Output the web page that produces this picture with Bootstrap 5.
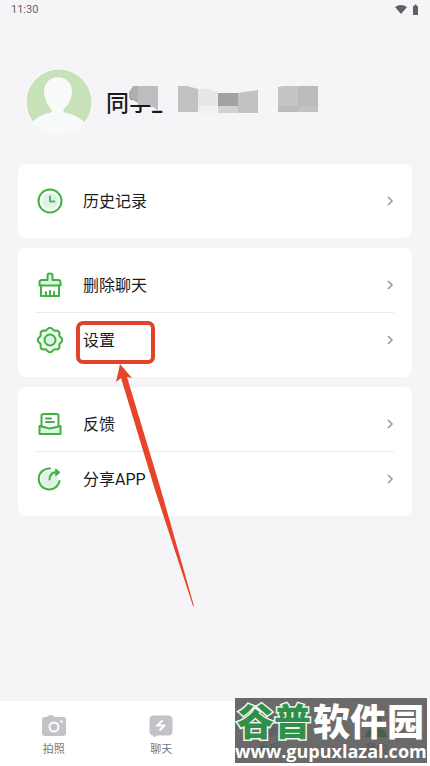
<!DOCTYPE html>
<html lang="zh-CN">
<head>
<meta charset="utf-8">
<meta name="viewport" content="width=device-width, initial-scale=1">
<title>我的</title>
<link href="https://cdn.jsdelivr.net/npm/bootstrap@5.3.0/dist/css/bootstrap.min.css" rel="stylesheet">
<style>
body{background:#f5f5f8;color:#1b1b1f;font-family:Roboto,"Noto Sans CJK SC",sans-serif;font-size:16px}
svg{display:block;flex-shrink:0}
.status{height:20px;padding:0 10px 0 11px;font-size:11px;color:#66666a}
.profile{padding:48px 25px 0;gap:14px}
.who{font-size:23px;line-height:34px;font-weight:500;padding-top:3px}
.mosaic{left:22px;top:2px}
.groups{padding:28px 18px 0;gap:10px}
.menu-group{border-radius:8px;background:#fff;padding:10px 18px}
.menu-row{height:54px;color:#1b1b1f;gap:19px}
.menu-row + .menu-row{border-top:1px solid #ebebee;height:55px}
.menu-row .pic{width:28px;height:28px}
.menu-label{padding-top:1px}
.pic{fill:none;stroke:#3cb43f;stroke-width:2;stroke-linecap:round;stroke-linejoin:round}
.tint{fill:#e0f1e6}
.ring{left:-7px;top:-7px;width:79px;height:43px;border:4px solid #e2412b;border-radius:7px}
.pointer{left:32px;top:36px;pointer-events:none;z-index:2}
.tabs{height:65px;background:#fff}
.tab{gap:4px;padding-top:13px;color:#77777c;font-size:11px;line-height:16px;background:none;border:0}
.stamp{right:3px;bottom:3px;width:192px;height:65px;background:rgba(82,82,82,.86);color:#fff;z-index:3}
.stamp-name{font:900 37px/44px "Noto Sans CJK SC",sans-serif;padding:0 0 0 2px}
.stamp-green{color:#2f9149;-webkit-text-stroke:3px #eef6ef;paint-order:stroke fill;padding-right:2px}
.stamp-url{font:700 18px/18px "Open Sans",sans-serif}
</style>
</head>
<body>
<div class="d-flex flex-column min-vh-100 position-relative">
  <header class="status d-flex align-items-center justify-content-between">
    <span>11:30</span>
    <svg width="26" height="12" viewBox="0 0 26 12" fill="#606064"><path d="M1 3Q7-1 13 3L7 10Z"/><path d="M19 2h1.500V0.500h2V2H24v9h-5z"/></svg>
  </header>
  <section class="profile d-flex align-items-center">
    <svg width="67" height="68" viewBox="0 0 67 68" role="img" aria-label="头像">
      <defs><clipPath id="round"><circle cx="34" cy="34" r="32.500"/></clipPath><filter id="soft"><feGaussianBlur stdDeviation=".7"/></filter></defs>
      <circle cx="34" cy="34" r="33.500" fill="#fbfcfb"/>
      <g clip-path="url(#round)"><path fill="#c7e1b9" d="M0 0h67v68H0z"/><path filter="url(#soft)" fill="#f8fafa" d="M-2 68Q8 47 25 45Q28 44 26 41Q20 34 19 25C18 4 48 4 47 25Q46 34 39 41Q37 44 41 45Q58 47 69 68V74H-2z"/></g>
    </svg>
    <div class="who position-relative">同学_
      <svg class="mosaic position-absolute" width="192" height="30" viewBox="0 0 192 30">
        <path fill="#b0b0b2" d="M5 0h5v17L1 12V6z"/><path fill="#bdbdbf" d="M10 0h20v24L21 19H10z"/>
        <path fill="#c2c2c4" d="M50 0h9l11 3v23H50z"/><path fill="#e7e7e9" d="M70 3l10 0 10 3v14H70z"/><path fill="#f0f0f2" d="M70 20h20v7H70z"/>
        <path fill="#a2a2a4" d="M90 7h20v13H90z"/><path fill="#d2d2d4" d="M90 20h20v7H90z"/><path fill="#c2c2c4" d="M110 7l20-3v23h-20z"/>
        <path fill="#c5c5c7" d="M150 1l5-1h15v20h-20z"/><path fill="#bbbbbd" d="M170 0h20v20h-20zM150 20h20v6h-20z"/><path fill="#c2c2c4" d="M170 20h20v6h-20z"/>
      </svg>
    </div>
  </section>
  <main class="groups d-flex flex-column flex-grow-1">
    <nav class="menu-group">
      <a href="#" class="menu-row d-flex align-items-center text-decoration-none">
        <svg class="pic" viewBox="0 0 28 28"><circle cx="14" cy="14" r="11.500"/><circle class="tint" cx="14" cy="14" r="8" stroke="none"/><path d="M14 9.500v5h4.500" stroke="#55b866"/></svg>
        <span class="menu-label">历史记录</span>
        <svg class="ms-auto" width="7" height="10" viewBox="0 0 7 10" fill="none" stroke="#98989c" stroke-width="1.500"><path d="M1 1L5 5 1 9"/></svg>
      </a>
    </nav>
    <nav class="menu-group">
      <a href="#" class="menu-row d-flex align-items-center text-decoration-none">
        <svg class="pic" viewBox="0 0 28 28"><path class="tint" d="M11.500 9V4.500Q11.500 2.500 14 2.500T16.500 4.500V9H22Q24.500 9 24.500 11V14.500H3.500V11Q3.500 9 6 9Z"/><path d="M5 14.500v10.500h18V14.500M10 25v-4M14 25v-5M18 25v-4"/></svg>
        <span class="menu-label">删除聊天</span>
        <svg class="ms-auto" width="7" height="10" viewBox="0 0 7 10" fill="none" stroke="#98989c" stroke-width="1.500"><path d="M1 1L5 5 1 9"/></svg>
      </a>
      <a href="#" class="menu-row d-flex align-items-center text-decoration-none">
        <svg class="pic" viewBox="0 0 28 28"><path fill="#f0f8f1" d="M11.500 3Q14 .500 16.500 3Q18 5.500 20 4.500Q23.500 4.500 23.500 8Q22.500 10 25 11.500Q27.500 14 25 16.500Q22.500 18 23.500 20Q23.500 23.500 20 23.500Q18 22.500 16.500 25Q14 27.500 11.500 25Q10 22.500 8 23.500Q4.500 23.500 4.500 20Q5.500 18 3 16.500Q.500 14 3 11.500Q5.500 10 4.500 8Q4.500 4.500 8 4.500Q10 5.500 11.500 3Z"/><circle cx="14" cy="14" r="5.500" class="tint"/></svg>
        <span class="menu-label position-relative">设置
          <span class="ring position-absolute"></span>
          <svg class="pointer position-absolute" width="82" height="244" viewBox="0 0 82 244"><path fill="#e7442b" d="M5 0L17 14 12 13L46 126 79 242H78L40 126 6 14L1 18Z"/></svg>
        </span>
        <svg class="ms-auto" width="7" height="10" viewBox="0 0 7 10" fill="none" stroke="#98989c" stroke-width="1.500"><path d="M1 1L5 5 1 9"/></svg>
      </a>
    </nav>
    <nav class="menu-group">
      <a href="#" class="menu-row d-flex align-items-center text-decoration-none">
        <svg class="pic" viewBox="0 0 28 28"><path d="M5.500 16V5.500Q5.500 4 7.500 4H20.500Q22.500 4 22.500 5.500V16M10 8.500h5M10 12h8"/><path class="tint" d="M3.500 16 14 18.500 24.500 16V24H3.500Z"/></svg>
        <span class="menu-label">反馈</span>
        <svg class="ms-auto" width="7" height="10" viewBox="0 0 7 10" fill="none" stroke="#98989c" stroke-width="1.500"><path d="M1 1L5 5 1 9"/></svg>
      </a>
      <a href="#" class="menu-row d-flex align-items-center text-decoration-none">
        <svg class="pic" viewBox="0 0 28 28"><circle class="tint" cx="13.500" cy="14.500" r="8.500" stroke="none"/><path d="M14 3.500A10.500 10.500 0 1 0 23.500 16"/><path d="M13.500 14.500Q14 7 21 7"/><path d="M20 4 24 7.500 20 10.500Z" fill="#3cb43f" stroke-width="1"/></svg>
        <span class="menu-label">分享APP</span>
        <svg class="ms-auto" width="7" height="10" viewBox="0 0 7 10" fill="none" stroke="#98989c" stroke-width="1.500"><path d="M1 1L5 5 1 9"/></svg>
      </a>
    </nav>
  </main>
  <footer class="tabs row g-0">
    <button type="button" class="tab col d-flex flex-column align-items-center">
      <svg width="24" height="24" viewBox="0 0 24 24"><path fill="#c2c2c7" d="M3 3H5Q6 1 9 1T12 3H21Q24 3 24 6V19Q24 22 21 22H3Q0 22 0 19V6Q0 3 3 3Z"/><circle cx="12" cy="13" r="4.500" fill="none" stroke="#fff" stroke-width="2"/><circle cx="19.500" cy="7.500" r="1.200" fill="#fff"/></svg>
      <span>拍照</span>
    </button>
    <button type="button" class="tab col d-flex flex-column align-items-center">
      <svg width="24" height="24" viewBox="0 0 24 24"><path fill="#c2c2c7" d="M5 1.500H19Q23.500 1.500 23.500 6V17Q23.500 21.500 19 21.500H8L5 23.500 4 21.500Q.500 21 .500 17V6Q.500 1.500 5 1.500Z"/><path d="M13 7 8 11.500H15.500L11 16" fill="none" stroke="#fff" stroke-width="2" stroke-linejoin="round" stroke-linecap="round"/></svg>
      <span>聊天</span>
    </button>
    <button type="button" class="tab col d-flex flex-column align-items-center">
      <svg width="24" height="24" viewBox="0 0 24 24"><circle cx="12" cy="12" r="11" fill="#c2c2c7"/></svg>
      <span>发现</span>
    </button>
    <button type="button" class="tab col d-flex flex-column align-items-center">
      <svg width="24" height="24" viewBox="0 0 24 24" fill="#24ae36"><circle cx="12" cy="7" r="6"/><path d="M1 23Q2 14 12 14T23 23Z"/></svg>
      <span>我的</span>
    </button>
  </footer>
  <aside class="stamp position-absolute text-nowrap">
    <div class="stamp-name"><span class="stamp-green">谷普</span>软件园</div>
    <div class="stamp-url">www.gupuxlazal.com</div>
  </aside>
</div>
<script src="https://cdn.jsdelivr.net/npm/bootstrap@5.3.0/dist/js/bootstrap.bundle.min.js"></script>
</body>
</html>
